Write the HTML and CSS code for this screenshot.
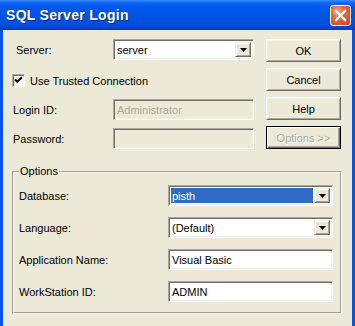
FILE: index.html
```html
<!DOCTYPE html>
<html>
<head>
<meta charset="utf-8">
<link rel="stylesheet" href="styles.css">
</head>
<body>
<div class="window">
  <div class="titlebar">
    <span class="title">SQL Server Login</span>
    <span class="close"><svg width="21" height="21" viewBox="0 0 21 21"><path d="M6 6 L15 15 M15 6 L6 15" stroke="#fff" stroke-width="2.4" stroke-linecap="square"/></svg></span>
  </div>
  <div class="client">
    <div class="top">
      <div class="form">
        <div class="row row-server">
          <span class="lbl lbl-server">Server:</span>
          <div class="combo w141"><span class="value">server</span><span class="drop"><svg width="7" height="4" viewBox="0 0 7 4"><path d="M0 0 H7 L3.5 4 Z" fill="#000"/></svg></span></div>
        </div>
        <div class="row row-check">
          <span class="check"><svg width="11" height="11" viewBox="0 0 11 11"><path d="M2 4.5 L4.3 6.8 L9 2.2" fill="none" stroke="#000" stroke-width="2"/></svg></span>
          <span class="check-label">Use Trusted Connection</span>
        </div>
        <div class="row row-login">
          <span class="lbl">Login ID:</span>
          <div class="field disabled w141">Administrator</div>
        </div>
        <div class="row row-pass">
          <span class="lbl">Password:</span>
          <div class="field disabled w141"></div>
        </div>
      </div>
      <div class="buttons">
        <button class="btn">OK</button>
        <button class="btn">Cancel</button>
        <button class="btn">Help</button>
        <button class="btn btn-disabled">Options &gt;&gt;</button>
      </div>
    </div>
    <fieldset class="group">
      <legend>Options</legend>
      <div class="grow grow-first">
        <span class="glbl">Database:</span>
        <div class="combo w165"><span class="value selected">pisth</span><span class="drop"><svg width="7" height="4" viewBox="0 0 7 4"><path d="M0 0 H7 L3.5 4 Z" fill="#000"/></svg></span></div>
      </div>
      <div class="grow">
        <span class="glbl">Language:</span>
        <div class="combo w165"><span class="value">(Default)</span><span class="drop"><svg width="7" height="4" viewBox="0 0 7 4"><path d="M0 0 H7 L3.5 4 Z" fill="#000"/></svg></span></div>
      </div>
      <div class="grow">
        <span class="glbl">Application Name:</span>
        <div class="field w165">Visual Basic</div>
      </div>
      <div class="grow">
        <span class="glbl">WorkStation ID:</span>
        <div class="field w165">ADMIN</div>
      </div>
    </fieldset>
  </div>
</div>
</body>
</html>
```

FILE: styles.css
```css
html, body {
  margin: 0;
  padding: 0;
  background: #ECE9D8;
}
body {
  font-family: "Liberation Sans", Arial, sans-serif;
  font-size: 11px;
  color: #000;
}
.window {
  width: 355px;
  height: 326px;
  overflow: hidden;
  display: flex;
  flex-direction: column;
}
.titlebar {
  height: 30px;
  flex: none;
  box-sizing: border-box;
  display: flex;
  align-items: center;
  justify-content: space-between;
  padding: 0 4px 0 6px;
  background: linear-gradient(180deg, #3D8EFF 0px, #0C63F2 3px, #0058EA 8px, #0054E3 16px, #0050DE 24px, #0044CF 28px, #0039BF 30px);
}
.title {
  color: #fff;
  font-weight: bold;
  font-size: 14px;
  letter-spacing: 0.3px;
  text-shadow: 1px 1px 0 #0A2A8C;
}
.close {
  width: 21px;
  height: 21px;
  box-sizing: border-box;
  border: 1px solid #fff;
  border-radius: 3px;
  background: radial-gradient(circle at 35% 30%, #F4A88A 0%, #E5643C 40%, #D2411A 100%);
  display: flex;
  align-items: center;
  justify-content: center;
  margin-top: 1px;
}
.close svg { display: block; margin: -1px; }
.client {
  flex: 1;
  background: #ECE9D8;
  border-left: 3px solid #0A52E0;
  border-right: 3px solid #0A52E0;
}
.top {
  display: flex;
  padding-top: 9px;
}
.form {
  width: 251px;
  display: flex;
  flex-direction: column;
}
.row {
  display: flex;
  align-items: center;
}
.row-server { height: 21px; }
.row-check { height: 13px; margin-top: 14px; padding-left: 9px; }
.row-login { height: 21px; margin-top: 12px; }
.row-pass { height: 21px; margin-top: 8px; }
.lbl {
  width: 110px;
  box-sizing: border-box;
  padding-left: 10px;
}
.lbl-server { padding-left: 13px; }
.check {
  width: 13px;
  height: 13px;
  box-sizing: border-box;
  background: #fff;
  border: 1px solid;
  border-color: #ACA899 #fff #fff #ACA899;
  box-shadow: inset 1px 1px 0 #716F64, inset -1px -1px 0 #F1EFE2;
  display: flex;
  align-items: center;
  justify-content: center;
}
.check svg { display: block; }
.check-label { margin-left: 5px; }
.combo, .field {
  height: 21px;
  box-sizing: border-box;
  border: 1px solid;
  border-color: #ACA899 #fff #fff #ACA899;
  box-shadow: inset 1px 1px 0 #716F64, inset -1px -1px 0 #F1EFE2;
  background: #fff;
}
.combo {
  display: flex;
  align-items: stretch;
  padding: 2px;
}
.w141 { width: 141px; }
.w165 { width: 165px; }
.value {
  flex: 1;
  display: flex;
  align-items: center;
  padding-left: 1px;
  margin-right: 1px;
}
.value.selected {
  background: #316AC5;
  color: #fff;
}
.drop {
  width: 16px;
  box-sizing: border-box;
  background: #ECE9D8;
  border: 1px solid;
  border-color: #F1EFE2 #716F64 #716F64 #F1EFE2;
  box-shadow: inset 1px 1px 0 #fff, inset -1px -1px 0 #ACA899;
  display: flex;
  align-items: center;
  justify-content: center;
}
.drop svg { display: block; margin-top: 1px; }
.field {
  display: flex;
  align-items: center;
  padding-left: 3px;
}
.field.disabled {
  background: #ECE9D8;
  color: #ACA899;
}
.buttons {
  margin-left: 12px;
  display: flex;
  flex-direction: column;
  gap: 6px;
}
.btn {
  width: 75px;
  height: 23px;
  box-sizing: border-box;
  font-family: inherit;
  font-size: 11px;
  color: #000;
  background: #ECE9D8;
  border: 1px solid;
  border-color: #fff #716F64 #716F64 #fff;
  box-shadow: inset 1px 1px 0 #F1EFE2, inset -1px -1px 0 #ACA899;
  padding: 0;
  margin: 0;
}
.btn.btn-disabled {
  border: 1px solid #000;
  box-shadow: inset 1px 1px 0 #fff, inset -1px -1px 0 #716F64, inset -2px -2px 0 #ACA899;
  color: #ACA899;
  text-shadow: 1px 1px 0 #fff;
}
.group {
  margin: 16px 0 0 9px;
  width: 330px;
  box-sizing: border-box;
  min-width: 0;
  padding: 0 0 10px 0;
  border: 2px groove #F4F3EE;
}
.group legend {
  padding: 0 1px;
  margin-left: 5px;
  line-height: 13px;
}
.grow {
  display: flex;
  align-items: center;
  margin-top: 11px;
}
.grow-first { margin-top: 7px; }
.glbl {
  width: 154px;
  box-sizing: border-box;
  padding-left: 5px;
}
```
